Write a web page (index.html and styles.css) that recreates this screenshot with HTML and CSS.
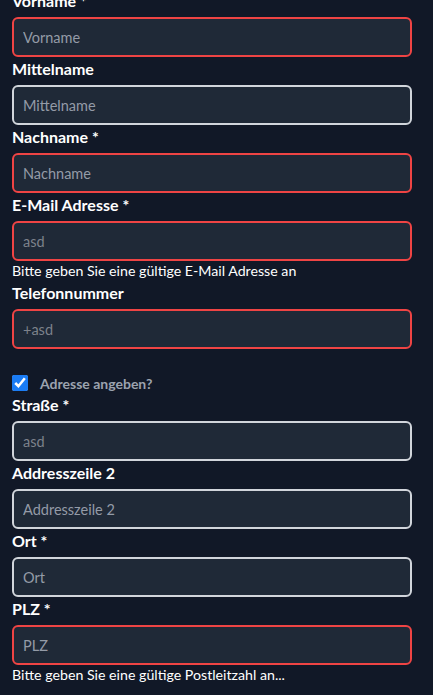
FILE: index.html
```html
<!DOCTYPE html>
<html lang="de">
<head>
<meta charset="utf-8">
<link rel="stylesheet" href="styles.css">
</head>
<body>
<form class="form">
  <div class="field">
    <label class="label">Vorname *</label>
    <input class="input invalid" type="text" placeholder="Vorname">
  </div>
  <div class="field">
    <label class="label">Mittelname</label>
    <input class="input" type="text" placeholder="Mittelname">
  </div>
  <div class="field">
    <label class="label">Nachname *</label>
    <input class="input invalid" type="text" placeholder="Nachname">
  </div>
  <div class="field">
    <label class="label">E-Mail Adresse *</label>
    <input class="input invalid filled" type="text" value="asd">
    <p class="hint">Bitte geben Sie eine gültige E-Mail Adresse an</p>
  </div>
  <div class="field">
    <label class="label">Telefonnummer</label>
    <input class="input invalid filled" type="text" value="+asd">
  </div>
  <div class="check-row">
    <input class="check" type="checkbox" checked>
    <span class="check-label">Adresse angeben?</span>
  </div>
  <div class="field">
    <label class="label">Straße *</label>
    <input class="input filled" type="text" value="asd">
  </div>
  <div class="field">
    <label class="label">Addresszeile 2</label>
    <input class="input" type="text" placeholder="Addresszeile 2">
  </div>
  <div class="field">
    <label class="label">Ort *</label>
    <input class="input" type="text" placeholder="Ort">
  </div>
  <div class="field">
    <label class="label">PLZ *</label>
    <input class="input invalid" type="text" placeholder="PLZ">
    <p class="hint">Bitte geben Sie eine gültige Postleitzahl an...</p>
  </div>
</form>
</body>
</html>
```
FILE: styles.css
```css
html, body {
  margin: 0;
  padding: 0;
  background: #111827;
  overflow: hidden;
}
body {
  font-family: Lato, "Noto Sans", sans-serif;
  color: #ffffff;
}
.form {
  display: flex;
  flex-direction: column;
  width: 400px;
  padding: 0 12px;
  margin-top: -11px;
}
.field {
  display: flex;
  flex-direction: column;
}
.label {
  font-size: 16px;
  font-weight: 700;
  line-height: 24px;
  margin-bottom: 4px;
  color: #ffffff;
}
.input {
  box-sizing: border-box;
  width: 400px;
  height: 40px;
  margin: 0;
  padding: 0 9px;
  border: 2px solid #d1d5db;
  border-radius: 6px;
  background: #1f2937;
  color: #7d828b;
  font-family: inherit;
  font-size: 14.5px;
  outline: none;
}
.input::placeholder {
  color: #949ba7;
}
.input.invalid {
  border-color: #ef4444;
}
.hint {
  margin: 0;
  font-size: 14.2px;
  line-height: 20px;
  color: #ffffff;
}
.check-row {
  display: flex;
  align-items: center;
  gap: 12px;
  height: 20px;
  margin-top: 24px;
}
.check {
  width: 16px;
  height: 16px;
  margin: 0;
  accent-color: #1a7cf5;
}
.check-label {
  font-size: 14px;
  font-weight: 700;
  color: #9ca3af;
}
```
